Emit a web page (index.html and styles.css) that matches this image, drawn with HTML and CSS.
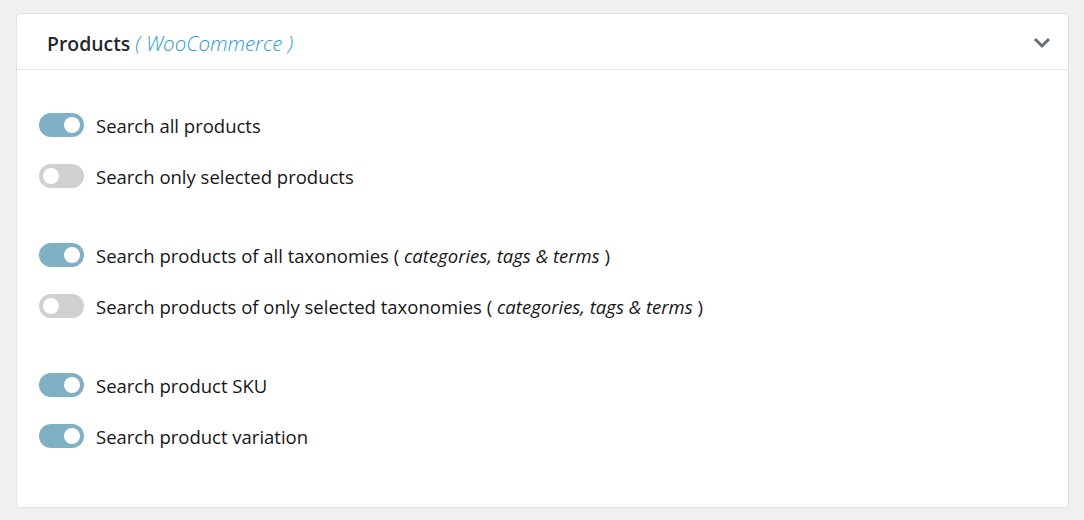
FILE: index.html
```html
<!DOCTYPE html>
<html lang="en">
<head>
    <meta charset="UTF-8">
    <meta name="viewport" content="width=device-width, initial-scale=1.0">
    <title>Products settings</title>
    <link rel="stylesheet" href="styles.css">
</head>
<body>
    <div class="panel">
        <div class="panel-header">
            <h2>Products <span class="sub">( WooCommerce )</span></h2>
            <svg class="chevron" width="18" height="12" viewBox="0 0 18 12">
                <path d="M2 2 L9 9 L16 2" fill="none" stroke="#65717d" stroke-width="3"/>
            </svg>
        </div>
        <div class="panel-body">
            <div class="group">
                <label class="option"><span class="toggle on"></span><span>Search all products</span></label>
                <label class="option"><span class="toggle"></span><span>Search only selected products</span></label>
            </div>
            <div class="group">
                <label class="option"><span class="toggle on"></span><span>Search products of all taxonomies ( <em>categories, tags &amp; terms</em> )</span></label>
                <label class="option"><span class="toggle"></span><span>Search products of only selected taxonomies ( <em>categories, tags &amp; terms</em> )</span></label>
            </div>
            <div class="group">
                <label class="option"><span class="toggle on"></span><span>Search product SKU</span></label>
                <label class="option"><span class="toggle on"></span><span>Search product variation</span></label>
            </div>
        </div>
    </div>
</body>
</html>
```

FILE: styles.css
```css
*{
    padding: 0;
    margin: 0;
    box-sizing: border-box;
}

body{
    background: #f0f0f0;
    font-family: "Open Sans", "Noto Sans", sans-serif;
    color: #161616;
    padding: 13px 15px 12px 16px;
}

.panel {
    background: #fff;
    border: 1px solid #e2e2e2;
    border-radius: 4px;
    height: 495px;
}

.panel-header {
    height: 56px;
    border-bottom: 1px solid #e5e5e5;
    display: flex;
    align-items: center;
    justify-content: space-between;
    padding: 3px 17px 0 30px;
}

.panel-header h2 {
    font-size: 19.4px;
    font-weight: 600;
    color: #23282d;
}

.panel-header .sub {
    font-style: italic;
    font-weight: 300;
    color: #2b9bd3;
    font-size: 20.5px;
}

.panel-body {
    padding: 43px 22px;
    display: flex;
    flex-direction: column;
    gap: 55px;
}

.group {
    display: flex;
    flex-direction: column;
    gap: 27px;
}

.option {
    display: flex;
    align-items: center;
    gap: 12px;
    font-size: 18.5px;
    height: 24px;
}

.toggle {
    width: 45px;
    height: 24px;
    border-radius: 12px;
    background: #d0d0d0;
    position: relative;
    flex-shrink: 0;
}

.toggle::after {
    content: "";
    position: absolute;
    top: 4px;
    left: 4px;
    width: 16px;
    height: 16px;
    border-radius: 50%;
    background: #fff;
}

.toggle.on {
    background: #7fb0c3;
}

.toggle.on::after {
    left: 25px;
}
```
